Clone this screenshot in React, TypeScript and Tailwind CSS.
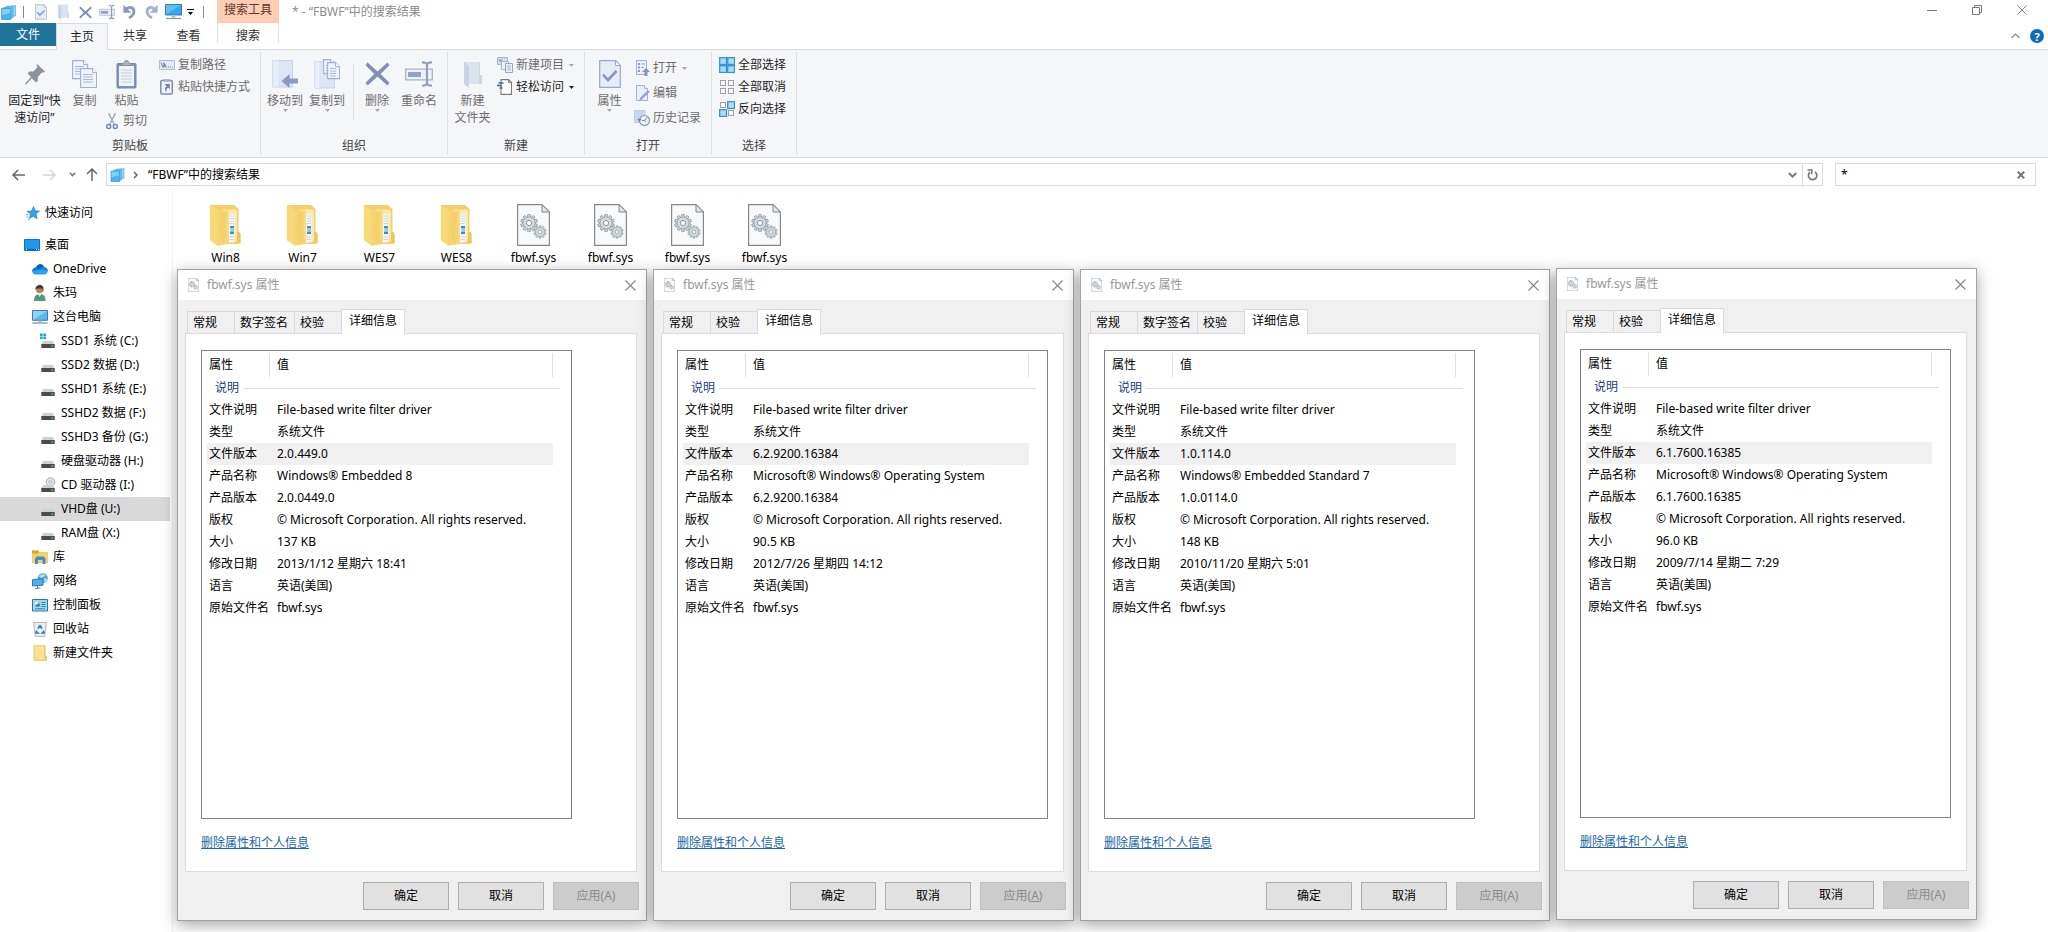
import React from "react";

type IconProps = { className?: string };

/* ---------- shared icons ---------- */

const LibraryIcon = ({ className = "w-4 h-4" }: IconProps) => (
  <svg viewBox="0 0 16 16" className={className} aria-hidden="true">
    <path d="M6 1.500 15.500.600v11L6 12.500z" fill="#9bd8f7" stroke="#4aa9dd" strokeWidth=".7" />
    <path d="M3.500 2.500 12.800 1.600v12l-9.300 1z" fill="#6cc6f2" stroke="#3d9fd6" strokeWidth=".7" />
    <path d="M.6 3.500h9.900v12H.6z" fill="#45b5f0" stroke="#2d93cf" strokeWidth=".7" />
    <path d="M1.300 4.200h8.500v4.500l-8.500 2z" fill="#7fd0f7" />
  </svg>
);

const CheckDoc = ({ className = "w-4 h-4" }: IconProps) => (
  <svg viewBox="0 0 22 28" className={className} aria-hidden="true">
    <path d="M.7.7h15.800l4.800 4.800v21.800H.7z" fill="#e6edf8" stroke="#98a9c8" strokeWidth="1.200" />
    <path d="M16.500.7v4.800h4.800z" fill="#fff" stroke="#98a9c8" strokeWidth="1" />
    <path d="m4 14.500 5 5.500 8.500-9" fill="none" stroke="#8497bd" strokeWidth="2.600" />
  </svg>
);

const PaleFolder = ({ className = "w-4 h-4" }: IconProps) => (
  <svg viewBox="0 0 18 27" className={className} aria-hidden="true">
    <path d="M0 1h16v22H5z" fill="#dbe3ef" />
    <path d="M16 1v13h2v9h-3V1z" fill="#ccd7e7" />
    <path d="M0 1 5 5v22L0 23z" fill="#c6d3e6" />
  </svg>
);

const Cross = ({ className = "w-4 h-4" }: IconProps) => (
  <svg viewBox="0 0 24 24" className={className} aria-hidden="true">
    <path d="M2.500 1 12 9.500 21.500 1 23.500 3.500 15 12l8.500 8.500-2 2.500L12 14.500 2.500 23 .5 20.500 9 12 .5 3.500z" fill="#7f90b4" />
  </svg>
);

const RenameIcon = ({ className = "w-4 h-4" }: IconProps) => (
  <svg viewBox="0 0 28 26" className={className} aria-hidden="true">
    <path d="M.7 8.200h26.600v10.600H.7z" fill="#eef2f9" stroke="#a3b2ce" strokeWidth="1.300" />
    <path d="M3 11h13v5H3z" fill="#93a5c6" />
    <path d="M17 1.300c3 0 4.500.4 5 2 .5-1.600 2-2 5-2M17 24.700c3 0 4.500-.4 5-2 .5 1.600 2 2 5 2M22 3v20" fill="none" stroke="#8f9fbd" strokeWidth="2.200" />
  </svg>
);

const UndoIcon = ({ className = "w-4 h-4", flip = false }: IconProps & { flip?: boolean }) => (
  <svg viewBox="0 0 16 16" className={className} aria-hidden="true">
    <g transform={flip ? "translate(16 0) scale(-1 1)" : undefined}>
      <path d="M4 5.800C8 1.500 13 4 12.700 8.500 12.500 11.500 10 13.500 7.500 14.800" fill="none" stroke={flip ? "#a3b1cb" : "#8798b9"} strokeWidth="3" />
      <path d="M1.500.8v8.600h8.500z" fill={flip ? "#a3b1cb" : "#8798b9"} />
    </g>
  </svg>
);

const MonitorIcon = ({ className = "w-4 h-4" }: IconProps) => (
  <svg viewBox="0 0 17 16" className={className} aria-hidden="true">
    <path d="M.5.500h16v10.500H.5z" fill="#2fa8ee" stroke="#3b6f96" strokeWidth=".9" />
    <path d="M1 1h15L1 10.500z" fill="#5cc0f5" />
    <path d="M6.500 11.500h4V14h-4z" fill="#b8c4cc" />
    <path d="M1 14.500h15" stroke="#8a9aa5" strokeWidth="1.200" />
  </svg>
);

const Caret = ({ className = "text-gray-400" }: IconProps) => (
  <svg viewBox="0 0 5 3" className={`h-[3px] w-[5px] shrink-0 ${className}`} aria-hidden="true">
    <path d="M0 0h5L2.500 3z" fill="currentColor" />
  </svg>
);

/* ---------- ribbon icons ---------- */

const PinIcon = () => (
  <svg viewBox="0 0 20 21" className="h-[21px] w-5" aria-hidden="true">
    <path d="m12 0 8 7.500-2 1.300-1.200-.3-4 4.500.2 3.500-2 2-4.200-4.200L1 20.500l-1-.3.5-1.200L6 13 2.500 9.200l2-1.800 4 .2 4-4.300L11.500 1.500z" fill="#8a939d" />
  </svg>
);

const SheetShape = ({ x, y, w = 15, h = 19 }: { x: number; y: number; w?: number; h?: number }) => (
  <g transform={`translate(${x} ${y})`}>
    <path d={`M.6.6h${w - 5}l4 4v${h - 5}H.6z`} fill="#eff4fb" stroke="#9fb0ce" strokeWidth="1.100" />
    <path d={`M${w - 4.4}.6v4h4`} fill="#fff" stroke="#9fb0ce" strokeWidth="1" />
    <path d={`M3 6.500h${w - 7}M3 9h${w - 7}M3 11.500h${w - 7}M3 14h${w - 7}`} stroke="#a9bad8" strokeWidth="1" />
  </g>
);

const CopyIcon = () => (
  <svg viewBox="0 0 25 28" className="h-7 w-[25px]" aria-hidden="true">
    <SheetShape x={0} y={0} w={16} h={19} />
    <SheetShape x={8} y={8} w={17} h={20} />
  </svg>
);

const ClipboardIcon = () => (
  <svg viewBox="0 0 21 29" className="h-[29px] w-[21px]" aria-hidden="true">
    <rect x="1" y="3.500" width="19" height="24.500" rx="1" fill="#8093b8" stroke="#7386ab" />
    <path d="M3 6h15v20H3z" fill="#f1f5fb" />
    <path d="M6 5.500V3.500L8.500 3 9 .8h3l.5 2.200 2.500.5v2z" fill="#a9b3c4" stroke="#7d8ba5" strokeWidth=".8" />
    <path d="M5 10h11M5 13h11M5 16h11M5 19h11M5 22h11" stroke="#c0cce2" strokeWidth="1" />
  </svg>
);

const ScissorsIcon = () => (
  <svg viewBox="0 0 12 17" className="h-[17px] w-3" aria-hidden="true">
    <path d="M2.500 0 8.500 12M9.500 0l-6 12" stroke="#a3aebf" strokeWidth="1.500" />
    <circle cx="2.700" cy="13.500" r="2" fill="none" stroke="#6f89b8" strokeWidth="1.500" />
    <circle cx="9.300" cy="13.500" r="2" fill="none" stroke="#6f89b8" strokeWidth="1.500" />
  </svg>
);

const PathIcon = () => (
  <svg viewBox="0 0 16 16" className="h-4 w-4" aria-hidden="true">
    <path d="M.5 3.500h15v9H.5z" fill="#e2eaf6" stroke="#aebcd6" />
    <path d="m2 5.500 2 5 1.500-4 1.700 4M4.500 5.500l1.700 5M9 10h1M11 10h1M13 10h1" fill="none" stroke="#6f82a8" />
  </svg>
);

const PasteShortcutIcon = () => (
  <svg viewBox="0 0 16 16" className="h-4 w-4" aria-hidden="true">
    <rect x="1.800" y="1.500" width="11.500" height="13.500" rx="1" fill="#eef3fb" stroke="#7b8db2" strokeWidth="1.500" />
    <path d="M4.500.3h6v2.400h-6z" fill="#a6b1c5" />
    <path d="M5.500 5h5.300v5.300L9.200 8.700c-2 1-2 2-1.200 4-2.800-1.500-2.500-4.200-.3-5.500z" fill="#6e82aa" />
  </svg>
);

const MoveToIcon = () => (
  <svg viewBox="0 0 26 28" className="h-7 w-[26px]" aria-hidden="true">
    <path d="M.5.500h20v26.500H.5z" fill="#dbe5f3" stroke="#c5d2e6" />
    <path d="M.5.500h6v26.500h-6z" fill="#e5edf8" />
    <path d="m9.500 21 8-7v4.500H26v5h-8.500V28z" fill="#8a9bbd" />
  </svg>
);

const CopyToIcon = () => (
  <svg viewBox="0 0 26 30" className="h-[30px] w-[26px]" aria-hidden="true">
    <path d="M.5 2.500h20v26.500H.5z" fill="#dbe5f3" stroke="#c5d2e6" />
    <path d="M.5 2.500h5v26.500h-5z" fill="#e7eef9" />
    <SheetShape x={9} y={0} w={12} h={15} />
    <SheetShape x={13} y={3} w={13} h={17} />
  </svg>
);

const NewItemIcon = () => (
  <svg viewBox="0 0 16 16" className="h-4 w-4" aria-hidden="true">
    <path d="M.5.500h10v7h-10z" fill="#cfdcef" stroke="#a3b4d1" />
    <path d="M2 2.500h3v2H2z" fill="#8ea2c6" />
    <path d="M4.500 4.500h7v8h-7z" fill="#edf2fa" stroke="#a3b4d1" />
    <path d="M8.500 6.500h7v9h-7z" fill="#edf2fa" stroke="#94a6c8" />
    <path d="M10 9h4M10 11h4M10 13h4" stroke="#a9bad8" />
  </svg>
);

const EasyAccessIcon = () => (
  <svg viewBox="0 0 16 16" className="h-4 w-4" aria-hidden="true">
    <path d="M4 .6h7.500l3 3v11.800H4z" fill="#fff" stroke="#7c7c7c" strokeWidth="1.100" />
    <path d="M11.500.6v3h3" fill="none" stroke="#7c7c7c" />
    <path d="M1.500 4h5M0 6.500h5M2.500 9h3" stroke="#2f6ea8" strokeWidth="1.300" />
  </svg>
);

const OpenIcon = () => (
  <svg viewBox="0 0 16 16" className="h-4 w-4" aria-hidden="true">
    <path d="M2.500.500h10v14h-10z" fill="#eaf0f9" stroke="#a3b3cf" />
    <path d="M4 3h2v2H4zM4 6.500h2v2H4zM4 10h2v2H4z" fill="#8799bd" />
    <path d="M7.500 4H11M7.500 7.500H10" stroke="#8fa1c2" />
    <path d="m12 8 4 4h-2.500v4h-3v-4H8z" fill="#8395b8" />
  </svg>
);

const EditIcon = () => (
  <svg viewBox="0 0 16 16" className="h-4 w-4" aria-hidden="true">
    <path d="M2.500.500h8l3 3v12h-11z" fill="#eaf0f9" stroke="#a3b3cf" />
    <path d="M10.500.500v3h3" fill="#fff" stroke="#a3b3cf" />
    <path d="m14 5 1.800 1.800-7.800 7.700-2.500.8.700-2.500z" fill="#93a4c6" />
  </svg>
);

const HistoryIcon = () => (
  <svg viewBox="0 0 16 16" className="h-4 w-4" aria-hidden="true">
    <path d="M.5.500h10.500v12H.5z" fill="#c9d7eb" stroke="#bccbe2" />
    <circle cx="10.500" cy="10.500" r="5" fill="#eef3fa" stroke="#8799bb" strokeWidth="1.200" />
    <path d="M8 10.500h2.500L13 7.500M10.500 10.500l1.500 1.500" fill="none" stroke="#7487ae" />
    <path d="m3 9 2.500 3L7.500 9z" fill="#7487ae" />
  </svg>
);

const SelectIcon = ({ on }: { on: boolean[] }) => (
  <svg viewBox="0 0 16 16" className="h-4 w-4" aria-hidden="true">
    {on.map((filled, i) => {
      const x = (i % 2) * 8;
      const y = Math.floor(i / 2) * 8;
      return filled ? (
        <rect key={i} x={x + 0.7} y={y + 0.7} width="6.800" height="6.800" fill="#a8dcf7" stroke="#3793cf" strokeWidth="1.300" />
      ) : (
        <rect key={i} x={x + 1.5} y={y + 1.5} width="5" height="5" fill="#fff" stroke="#a0a0a0" />
      );
    })}
  </svg>
);

/* ---------- tree icons ---------- */

const StarIcon = () => (
  <svg viewBox="0 0 16 16" className="h-4 w-4" aria-hidden="true">
    <path d="m9.500 1.500 1.600 4.200 4.400.3-3.400 3 1 4.700-3.900-2.400-3.700 2.300.8-4.300L3 6.300l4.500-.4z" fill="#3aa0e6" stroke="#2b8bd2" strokeWidth=".7" />
    <path d="M2 9.500h2.500M2.500 12h2M4 14.500h1.500" stroke="#5fb3ea" />
  </svg>
);

const DesktopIcon = () => (
  <svg viewBox="0 0 16 16" className="h-4 w-4" aria-hidden="true">
    <path d="M.5 2.500h15v11H.5z" fill="#1e96ef" stroke="#1573bd" />
    <path d="M1 12.500h14" stroke="#0f5d9e" strokeWidth="1.200" />
    <path d="M2 12.500h1M12 12.500h1M14 12.500h.8" stroke="#e8f5ff" />
  </svg>
);

const OneDriveIcon = () => (
  <svg viewBox="0 0 16 16" className="h-4 w-4" aria-hidden="true">
    <path d="M4 6.500C5.500 2 10.500 1.800 12.200 6L7 10 1.500 8.500C2 7 3 6.500 4 6.500z" fill="#0a5fb5" />
    <path d="M3.800 6.400C1 6.500-.5 9 .3 11L7.500 8.500z" fill="#1279d0" />
    <path d="M12 6c3 0 4.500 3 3.500 5L7 8.500C8.500 7 10 6 12 6z" fill="#1a86dd" />
    <path d="M.3 11C1 13 2.500 13.500 4 13.500h8.500c1.500 0 2.500-1 3-2.500L7.500 8.300z" fill="#2b9ff0" />
  </svg>
);

const UserIcon = () => (
  <svg viewBox="0 0 16 16" className="h-4 w-4" aria-hidden="true">
    <path d="M2 16c0-5 2-7 6-7s5.500 2 5.500 7z" fill="#4f9a80" />
    <path d="m6 9 1.500 3L9.500 9z" fill="#dfe8e4" />
    <circle cx="7.500" cy="5" r="3.300" fill="#b9845c" />
    <path d="M3.500 5C3 1.500 5.500 0 7.700 0c2.500 0 4.200 1.500 3.800 5.500L10.500 7V3.500H5z" fill="#4b3527" />
  </svg>
);

const PcIcon = () => (
  <svg viewBox="0 0 16 16" className="h-4 w-4" aria-hidden="true">
    <path d="M.5 1.500h15v9.800H.5z" fill="#58b8f0" stroke="#3f7ea8" />
    <path d="M1 2h14L1 11z" fill="#8ed3f8" />
    <path d="M6.500 11.500h3V13h-3z" fill="#aab8c1" />
    <path d="M.5 14h15" stroke="#8fa2b0" strokeWidth="1.500" />
  </svg>
);

const DriveIcon = ({ kind = "disk" }: { kind?: "disk" | "system" | "cd" }) => (
  <svg viewBox="0 0 16 16" className="h-4 w-4" aria-hidden="true">
    {kind === "cd" && (
      <g>
        <circle cx="10.500" cy="5" r="4.300" fill="#dfe3e6" stroke="#9a9fa3" strokeWidth=".8" />
        <circle cx="10.500" cy="5" r="1.300" fill="#fff" stroke="#9a9fa3" strokeWidth=".7" />
      </g>
    )}
    {kind === "system" && <path d="M0 .5h2.700v2.500H0zM3.300.5H6v2.500H3.300zM0 3.600h2.700v2.500H0zM3.300 3.600H6v2.500H3.300z" fill="#22a7dc" />}
    <path d="M3.500 8h9l2 3H1.500z" fill="#cdd0d2" />
    <path d="M1.300 11h13.400v4H1.300z" fill="#484c4f" />
    <path d="M11.200 12.500h2v1.200h-2z" fill="#5fe04a" />
  </svg>
);

const LibraryFolderIcon = () => (
  <svg viewBox="0 0 16 16" className="h-4 w-4" aria-hidden="true">
    <path d="M0 1.500h6l1 1.500h9v11H0z" fill="#f6cf66" />
    <path d="M0 1.500h6l1 1.500-1 1.500H0z" fill="#d9a32e" />
    <path d="M3 15V9.500L5 7.500h6.500L13.500 9.500V15h-3v-4H6v4z" fill="#3f8fc9" />
  </svg>
);

const NetworkIcon = () => (
  <svg viewBox="0 0 16 16" className="h-4 w-4" aria-hidden="true">
    <circle cx="10.800" cy="5.200" r="5" fill="#5aa2cf" />
    <path d="M7 3c2-2 5-2.500 7-1-2 1-3 3-5 3zM12 5c1 0 3 1 3.500 1-.5 2-1.500 3-3 4z" fill="#b5dcec" />
    <path d="M.5 6.500 11 5.800v6.400L.5 13z" fill="#49b2f2" stroke="#2c7db5" />
    <path d="M3 15.500 8.500 15M5.500 13v2" stroke="#6d8697" />
  </svg>
);

const ControlPanelIcon = () => (
  <svg viewBox="0 0 16 16" className="h-4 w-4" aria-hidden="true">
    <path d="M.5 2.500h15v11.500H.5z" fill="#9bd9f5" stroke="#2678a8" />
    <circle cx="5.500" cy="7" r="2.600" fill="#fff" />
    <path d="M5.500 7V4.400A2.600 2.600 0 0 1 8.100 7z" fill="#e8a33c" />
    <path d="M5.500 7h2.600A2.600 2.600 0 0 1 3 8z" fill="#2f86bf" />
    <path d="M9.500 5.500h4M9.500 7.500h4M9.500 9.500h4M3 11.800h10" stroke="#2678a8" strokeWidth=".9" />
  </svg>
);

const RecycleIcon = () => (
  <svg viewBox="0 0 16 16" className="h-4 w-4" aria-hidden="true">
    <path d="M1.500 1.500h13l-1.800 14H3.300z" fill="#eaedf0" stroke="#a4abb1" strokeWidth=".8" />
    <path d="m8 4.500 2 3M6 7.500l2-3M4.800 9.500 4 12h3.200M11.200 9.500 12 12H9" fill="none" stroke="#2f7fc4" strokeWidth="1.700" />
  </svg>
);

const PlainFolderIcon = () => (
  <svg viewBox="0 0 16 16" className="h-4 w-4" aria-hidden="true">
    <path d="M2 .8h11v9.500l1.500 1v4H2z" fill="#f0cf6a" stroke="#dcb44c" strokeWidth=".7" />
    <path d="M2.500 1.200h9.500v13.500H2.500z" fill="#fbe296" />
  </svg>
);

/* ---------- file icons ---------- */

const BigFolder = () => (
  <svg viewBox="0 0 34 42" className="h-[42px] w-[34px]" aria-hidden="true">
    <path d="M1 1h24l4.500 4v23.500l2 1.500v9l-6 1H12z" fill="#f3d06c" />
    <path d="M13 5.500h13.500l1.500 2V38l-14 2z" fill="#fbe9ab" />
    <path d="M20 10h5.500v27.500L20 38.500z" fill="#f4f8fb" />
    <path d="M20.500 12h4.500M20.500 14.500h4.500M20.500 17h4.500M20.500 19.500h4.500M20.500 33h4.500M20.500 35.500h4.500" stroke="#c3ccd6" strokeWidth=".8" />
    <path d="M21 22h4v2.500h-4zM21 27.500h4V30h-4z" fill="#3a8fc4" />
    <path d="M21.500 24.500h3.500v2.500h-3.500z" fill="#8fc9e8" />
    <path d="M28 28h2.500l1 1.500v10H26V38l2-.5z" fill="#eec65c" />
    <path d="M.8 1.200 8 6v35.500L.8 36z" fill="#f8dc84" />
    <path d="M8 6h5l2.500 2v9l-3 9v11.500l7-1v3L8 41.500z" fill="#efc95f" />
    <path d="M1 1.200 8.500 6H20V40l-11 1.700L1 36.300z" fill="#f7d877" opacity=".8" />
    <path d="M12.500 8h5v30.500l-3.500.7-4-13 2.500-9z" fill="#f2cd65" opacity=".7" />
  </svg>
);

const gearTeeth = [0, 36, 72, 108, 144, 180, 216, 252, 288, 324];

const Gear = ({ cx, cy, r }: { cx: number; cy: number; r: number }) => (
  <g transform={`translate(${cx} ${cy}) scale(${r / 8})`}>
    {gearTeeth.map((a) => (
      <rect key={a} x="-1.500" y="-9.500" width="3" height="4" transform={`rotate(${a})`} fill="#d3dbe1" stroke="#8b959d" strokeWidth=".9" />
    ))}
    <circle r="6.800" fill="#d3dbe1" stroke="#8b959d" strokeWidth=".9" />
    <circle r="6.200" fill="#d3dbe1" />
    <circle r="3" fill="#f8f9fa" stroke="#8b959d" strokeWidth="1.100" />
  </g>
);

const SysFile = ({ className = "h-[42px] w-[33px]" }: IconProps) => (
  <svg viewBox="0 0 33 42" className={className} aria-hidden="true">
    <path d="M.6.600h24.400l7.400 7.400v33.400H.6z" fill="#f8f9fa" stroke="#85898c" strokeWidth="1.200" />
    <path d="M25 .600V8h7.400z" fill="#e3e6e8" stroke="#85898c" strokeWidth="1" />
    <Gear cx={12} cy={19} r={7} />
    <Gear cx={23} cy={28} r={5.2} />
  </svg>
);

const CloseX = ({ className = "h-[11px] w-[11px]" }: IconProps) => (
  <svg viewBox="0 0 11 11" className={className} aria-hidden="true">
    <path d="m.5.500 10 10M10.500.500l-10 10" stroke="#858585" strokeWidth="1.100" />
  </svg>
);

/* ---------- ribbon ---------- */

function Group({ label, className, children }: { label: string; className: string; children: React.ReactNode }) {
  return (
    <section className={`flex shrink-0 flex-col border-r border-[#dddfe2] ${className}`}>
      <div className="flex flex-1">{children}</div>
      <h2 className="pb-px text-center leading-4 text-[#444]">{label}</h2>
    </section>
  );
}

function BigButton({
  icon,
  lines,
  width,
  enabled = false,
  caret = false,
}: {
  icon: React.ReactNode;
  lines: string[];
  width: string;
  enabled?: boolean;
  caret?: boolean;
}) {
  return (
    <button type="button" className={`flex shrink-0 flex-col items-center pt-1 ${width} ${enabled ? "text-[#1e1e1e]" : "text-[#6d6d6d]"}`}>
      <span className="flex h-9 items-center justify-center">{icon}</span>
      {lines.map((line) => (
        <span key={line} className="whitespace-nowrap leading-[17px]">
          {line}
        </span>
      ))}
      {caret && <Caret className="text-[#a8a8a8]" />}
    </button>
  );
}

function SmallButton({ icon, label, enabled = false, caret = false }: { icon: React.ReactNode; label: string; enabled?: boolean; caret?: boolean }) {
  return (
    <button type="button" className={`flex h-[22px] items-center whitespace-nowrap ${enabled ? "text-[#1e1e1e]" : "text-[#6d6d6d]"}`}>
      {icon}
      <span className="ml-[3px] leading-4">{label}</span>
      {caret && <Caret className={enabled ? "ml-[5px] text-[#1e1e1e]" : "ml-[5px] text-[#a8a8a8]"} />}
    </button>
  );
}

function Ribbon() {
  return (
    <div className="flex h-[109px] border-y border-[#d8dade] bg-[#f5f6f8] py-[2px]">
      <Group label="剪贴板" className="w-[261px]">
        <BigButton width="w-[69px]" enabled icon={<PinIcon />} lines={["固定到“快", "速访问”"]} />
        <BigButton width="w-[31px]" icon={<CopyIcon />} lines={["复制"]} />
        <div className="flex w-[53px] shrink-0 flex-col items-center">
          <BigButton width="w-[53px]" icon={<ClipboardIcon />} lines={["粘贴"]} />
          <button type="button" className="mt-px flex h-[22px] items-center gap-[5px] whitespace-nowrap text-[#6d6d6d]">
            <ScissorsIcon />
            剪切
          </button>
        </div>
        <div className="flex flex-col pt-[2px] pl-[6px]">
          <SmallButton icon={<PathIcon />} label="复制路径" />
          <SmallButton icon={<PasteShortcutIcon />} label="粘贴快捷方式" />
        </div>
      </Group>

      <Group label="组织" className="w-[187px]">
        <BigButton width="w-[48px]" icon={<MoveToIcon />} lines={["移动到"]} caret />
        <BigButton width="w-[36px]" icon={<CopyToIcon />} lines={["复制到"]} caret />
        <div className="mt-3 mr-[5px] ml-2 h-14 w-px shrink-0 bg-[#dddfe2]" />
        <BigButton width="w-[36px]" icon={<Cross className="h-[26px] w-[25px]" />} lines={["删除"]} caret />
        <BigButton width="w-[48px]" icon={<RenameIcon className="h-[26px] w-7" />} lines={["重命名"]} />
      </Group>

      <Group label="新建" className="w-[137px]">
        <BigButton width="w-[49px]" icon={<PaleFolder className="h-[27px] w-[18px]" />} lines={["新建", "文件夹"]} />
        <div className="flex flex-col pt-[2px]">
          <SmallButton icon={<NewItemIcon />} label="新建项目" caret />
          <SmallButton icon={<EasyAccessIcon />} label="轻松访问" enabled caret />
        </div>
      </Group>

      <Group label="打开" className="w-[127px]">
        <BigButton width="w-[49px]" icon={<CheckDoc className="h-7 w-[22px]" />} lines={["属性"]} caret />
        <div className="flex flex-col gap-[3px] pt-[5px]">
          <SmallButton icon={<OpenIcon />} label="打开" caret />
          <SmallButton icon={<EditIcon />} label="编辑" />
          <SmallButton icon={<HistoryIcon />} label="历史记录" />
        </div>
      </Group>

      <Group label="选择" className="w-[85px]">
        <div className="flex flex-col pt-[2px] pl-[7px]">
          <SmallButton enabled icon={<SelectIcon on={[true, true, true, true]} />} label="全部选择" />
          <SmallButton enabled icon={<SelectIcon on={[false, false, false, false]} />} label="全部取消" />
          <SmallButton enabled icon={<SelectIcon on={[false, true, true, false]} />} label="反向选择" />
        </div>
      </Group>
    </div>
  );
}

/* ---------- window header ---------- */

function Header() {
  return (
    <header>
      <div className="flex h-[23px] items-stretch">
        <div className="flex w-[217px] items-center pt-[1px]">
          <LibraryIcon className="ml-px h-[15px] w-[15px]" />
          <span className="ml-[7px] h-3 w-px bg-[#8a8a8a]" />
          <div className="ml-[6px] flex">
            <button type="button" aria-label="属性" className="flex w-[22px] justify-center"><CheckDoc className="h-4 w-3" /></button>
            <button type="button" aria-label="新建文件夹" className="flex w-[22px] justify-center"><PaleFolder className="h-4 w-[13px]" /></button>
            <button type="button" aria-label="删除" className="flex w-[22px] items-center justify-center"><Cross className="h-[13px] w-[13px]" /></button>
            <button type="button" aria-label="重命名" className="flex w-[22px] justify-center"><RenameIcon className="h-4 w-4" /></button>
            <button type="button" aria-label="撤消" className="flex w-[22px] justify-center"><UndoIcon className="h-[15px] w-[15px]" /></button>
            <button type="button" aria-label="恢复" className="flex w-[22px] justify-center"><UndoIcon flip className="h-[15px] w-[15px]" /></button>
            <button type="button" aria-label="桌面" className="flex w-[22px] justify-center"><MonitorIcon className="h-4 w-[17px]" /></button>
          </div>
          <button type="button" aria-label="自定义快速访问工具栏" className="ml-[3px] flex flex-col items-center gap-[2px]">
            <span className="h-px w-[7px] bg-black" />
            <Caret className="text-black" />
          </button>
          <span className="ml-[9px] h-3 w-px bg-[#8a8a8a]" />
        </div>
        <div className="flex w-[62px] justify-center bg-[#fccdb3] pt-[2px] leading-4 text-[#5b3a2a]">搜索工具</div>
        <h1 className="flex-1 pt-[4px] pl-[13px] leading-4 text-[#8c8c8c]">* - “FBWF”中的搜索结果</h1>
        <div className="flex items-start pr-1">
          <button type="button" aria-label="最小化" className="flex h-5 w-[45px] items-center justify-center">
            <span className="h-px w-[10px] bg-[#777]" />
          </button>
          <button type="button" aria-label="还原" className="flex h-5 w-[45px] items-center justify-center">
            <svg viewBox="0 0 10 10" className="h-[10px] w-[10px]" aria-hidden="true">
              <path d="M.5 2.500h7v7h-7zM2.500 2.500v-2h7v7h-2" fill="none" stroke="#777" />
            </svg>
          </button>
          <button type="button" aria-label="关闭" className="flex h-5 w-[45px] items-center justify-center">
            <CloseX className="h-[10px] w-[10px]" />
          </button>
        </div>
      </div>

      <nav className="flex h-[26px] items-stretch">
        <button type="button" className="mb-[3px] w-14 bg-[#1f7299] text-white">文件</button>
        <button type="button" className="relative -mb-px w-[52px] border-x border-t border-[#d8dade] bg-[#f5f6f8] text-[#1e1e1e]">主页</button>
        <button type="button" className="w-[54px] text-[#333]">共享</button>
        <button type="button" className="w-[53px] text-[#333]">查看</button>
        <span className="w-[2px]" />
        <button type="button" className="mb-[6px] w-[62px] border-x border-[#e2e2e2] pt-[5px] text-[#333]">搜索</button>
        <div className="ml-auto flex items-center pr-1">
          <button type="button" aria-label="最小化功能区" className="mr-[10px]">
            <svg viewBox="0 0 9 6" className="h-[6px] w-[9px]" aria-hidden="true">
              <path d="m.5 5 4-4 4 4" fill="none" stroke="#8b8b8b" strokeWidth="1.200" />
            </svg>
          </button>
          <button type="button" aria-label="帮助" className="flex h-[14px] w-[14px] items-center justify-center rounded-full bg-[#0f6cbd] text-[11px] leading-none font-bold text-white">
            ?
          </button>
        </div>
      </nav>
      <Ribbon />

      <div className="flex h-[33px] items-center">
        <div className="flex w-[106px] items-center">
          <button type="button" aria-label="后退" className="ml-3">
            <svg viewBox="0 0 14 12" className="h-3 w-[14px]" aria-hidden="true">
              <path d="M6 1 1 6l5 5M1 6h12" fill="none" stroke="#666" strokeWidth="1.500" />
            </svg>
          </button>
          <button type="button" aria-label="前进" className="ml-4">
            <svg viewBox="0 0 14 12" className="h-3 w-[14px]" aria-hidden="true">
              <path d="m8 1 5 5-5 5M13 6H1" fill="none" stroke="#d6d6d6" strokeWidth="1.500" />
            </svg>
          </button>
          <button type="button" aria-label="最近浏览的位置" className="ml-[13px]">
            <svg viewBox="0 0 7 5" className="h-[5px] w-[7px]" aria-hidden="true">
              <path d="m.8.800 2.700 2.700L6.200.800" fill="none" stroke="#777" strokeWidth="1.600" />
            </svg>
          </button>
          <button type="button" aria-label="上移" className="ml-[10px]">
            <svg viewBox="0 0 12 13" className="h-[13px] w-3" aria-hidden="true">
              <path d="m1 6 5-5 5 5M6 1v12" fill="none" stroke="#666" strokeWidth="1.500" />
            </svg>
          </button>
        </div>
        <div className="flex h-[23px] flex-1 items-center border border-[#d9d9d9]">
          <LibraryIcon className="ml-[3px] h-[14px] w-[15px]" />
          <svg viewBox="0 0 5 8" className="ml-[8px] h-2 w-[5px]" aria-hidden="true">
            <path d="m1 1 3 3-3 3" fill="none" stroke="#666" strokeWidth="1.500" />
          </svg>
          <span className="ml-[10px] flex-1 leading-4 text-black">“FBWF”中的搜索结果</span>
          <button type="button" aria-label="展开地址栏" className="mr-[5px]">
            <svg viewBox="0 0 9 6" className="h-[6px] w-[9px]" aria-hidden="true">
              <path d="m.8 1 3.700 3.700L8.200 1" fill="none" stroke="#777" strokeWidth="1.900" />
            </svg>
          </button>
          <button type="button" aria-label="刷新" className="flex h-full w-5 items-center justify-center border-l border-[#d9d9d9]">
            <svg viewBox="0 0 11 12" className="h-3 w-[11px]" aria-hidden="true">
              <path d="M8 3A4.200 4.200 0 1 1 3 3.200" fill="none" stroke="#777" strokeWidth="1.700" />
              <path d="M.5.900h4.300v4.300" fill="none" stroke="#777" strokeWidth="1.500" />
            </svg>
          </button>
        </div>
        <div className="mr-3 ml-3 flex h-[23px] w-[201px] items-center border border-[#d9d9d9]">
          <input type="text" aria-label="搜索" defaultValue="*" className="min-w-0 flex-1 bg-transparent pl-[5px] text-black outline-none" />
          <button type="button" aria-label="清除搜索" className="mr-[10px]">
            <svg viewBox="0 0 8 8" className="h-2 w-2" aria-hidden="true">
              <path d="m.8.800 6.400 6.400M7.200.800.8 7.200" stroke="#777" strokeWidth="2" />
            </svg>
          </button>
        </div>
      </div>
    </header>
  );
}

/* ---------- navigation tree ---------- */

const tree: { label: string; icon: React.ReactNode; level: number; selected?: boolean }[] = [
  { label: "桌面", icon: <DesktopIcon />, level: 0 },
  { label: "OneDrive", icon: <OneDriveIcon />, level: 1 },
  { label: "朱玛", icon: <UserIcon />, level: 1 },
  { label: "这台电脑", icon: <PcIcon />, level: 1 },
  { label: "SSD1 系统 (C:)", icon: <DriveIcon kind="system" />, level: 2 },
  { label: "SSD2 数据 (D:)", icon: <DriveIcon />, level: 2 },
  { label: "SSHD1 系统 (E:)", icon: <DriveIcon />, level: 2 },
  { label: "SSHD2 数据 (F:)", icon: <DriveIcon />, level: 2 },
  { label: "SSHD3 备份 (G:)", icon: <DriveIcon />, level: 2 },
  { label: "硬盘驱动器 (H:)", icon: <DriveIcon />, level: 2 },
  { label: "CD 驱动器 (I:)", icon: <DriveIcon kind="cd" />, level: 2 },
  { label: "VHD盘 (U:)", icon: <DriveIcon />, level: 2, selected: true },
  { label: "RAM盘 (X:)", icon: <DriveIcon />, level: 2 },
  { label: "库", icon: <LibraryFolderIcon />, level: 1 },
  { label: "网络", icon: <NetworkIcon />, level: 1 },
  { label: "控制面板", icon: <ControlPanelIcon />, level: 1 },
  { label: "回收站", icon: <RecycleIcon />, level: 1 },
  { label: "新建文件夹", icon: <PlainFolderIcon />, level: 1 },
];

const indents = ["pl-6", "pl-8", "pl-10"];

function TreeItem({ label, icon, level, selected = false }: { label: string; icon: React.ReactNode; level: number; selected?: boolean }) {
  return (
    <li>
      <a href="#" className={`flex h-6 items-center gap-[5px] whitespace-nowrap text-black ${indents[level]} ${selected ? "bg-[#d9d9d9]" : ""}`}>
        {icon}
        <span>{label}</span>
      </a>
    </li>
  );
}

function Sidebar() {
  return (
    <nav className="w-[173px] shrink-0 border-r border-[#f3f3f3] pt-[10px] pr-[2px]">
      <ul className="mb-2">
        <TreeItem label="快速访问" icon={<StarIcon />} level={0} />
      </ul>
      <ul>
        {tree.map((item) => (
          <TreeItem key={item.label} {...item} />
        ))}
      </ul>
    </nav>
  );
}

/* ---------- files ---------- */

const files = [
  { name: "Win8", folder: true },
  { name: "Win7", folder: true },
  { name: "WES7", folder: true },
  { name: "WES8", folder: true },
  { name: "fbwf.sys", folder: false },
  { name: "fbwf.sys", folder: false },
  { name: "fbwf.sys", folder: false },
  { name: "fbwf.sys", folder: false },
];

function FileList() {
  return (
    <main className="flex-1">
      <ul className="flex pt-[13px] pl-[14px]">
        {files.map((file, i) => (
          <li key={i} className="flex w-[77px] flex-col items-center">
            {file.folder ? <BigFolder /> : <SysFile />}
            <span className="mt-1 leading-4 text-black">{file.name}</span>
          </li>
        ))}
      </ul>
    </main>
  );
}

/* ---------- property dialogs ---------- */

type DialogData = {
  place: string;
  signed: boolean;
  accessKey?: boolean;
  version: string;
  product: string;
  productVersion: string;
  size: string;
  modified: string;
};

const dialogs: DialogData[] = [
  {
    place: "left-[177px] top-[269px] w-[470px]",
    signed: true,
    version: "2.0.449.0",
    product: "Windows® Embedded 8",
    productVersion: "2.0.0449.0",
    size: "137 KB",
    modified: "2013/1/12 星期六 18:41",
  },
  {
    place: "left-[653px] top-[269px] w-[421px]",
    signed: false,
    accessKey: true,
    version: "6.2.9200.16384",
    product: "Microsoft® Windows® Operating System",
    productVersion: "6.2.9200.16384",
    size: "90.5 KB",
    modified: "2012/7/26 星期四 14:12",
  },
  {
    place: "left-[1080px] top-[269px] w-[470px]",
    signed: true,
    version: "1.0.114.0",
    product: "Windows® Embedded Standard 7",
    productVersion: "1.0.0114.0",
    size: "148 KB",
    modified: "2010/11/20 星期六 5:01",
  },
  {
    place: "left-[1556px] top-[268px] w-[421px]",
    signed: false,
    version: "6.1.7600.16385",
    product: "Microsoft® Windows® Operating System",
    productVersion: "6.1.7600.16385",
    size: "96.0 KB",
    modified: "2009/7/14 星期二 7:29",
  },
];

function Tab({ label, width }: { label: string; width: string }) {
  return (
    <button type="button" role="tab" className={`h-[22px] border-t border-l border-[#d9d9d9] pl-[5px] text-left text-black ${width}`}>
      {label}
    </button>
  );
}

function PropertiesDialog({ data }: { data: DialogData }) {
  const rows: [string, string][] = [
    ["文件说明", "File-based write filter driver"],
    ["类型", "系统文件"],
    ["文件版本", data.version],
    ["产品名称", data.product],
    ["产品版本", data.productVersion],
    ["版权", "© Microsoft Corporation. All rights reserved."],
    ["大小", data.size],
    ["修改日期", data.modified],
    ["语言", "英语(美国)"],
    ["原始文件名", "fbwf.sys"],
  ];
  return (
    <section role="dialog" aria-label="fbwf.sys 属性" className={`absolute border border-[#a3a3a3] bg-[#f0f0f0] shadow-[0_4px_14px_rgba(0,0,0,0.36)] ${data.place}`}>
      <div className="flex h-[30px] items-center bg-white pr-[10px] pl-[10px]">
        <SysFile className="h-[14px] w-[11px]" />
        <h2 className="ml-2 flex-1 text-[#999]">fbwf.sys 属性</h2>
        <button type="button" aria-label="关闭">
          <CloseX />
        </button>
      </div>

      <div className="pt-[9px] pr-[9px] pl-[7px]">
        <div role="tablist" className="flex items-end pl-[2px]">
          <Tab label="常规" width="w-[47px]" />
          {data.signed && <Tab label="数字签名" width="w-[60px]" />}
          <Tab label="校验" width="w-[47px]" />
          <button type="button" role="tab" aria-selected="true" className="relative -mb-px h-[25px] w-[64px] border border-b-0 border-[#d9d9d9] bg-white pb-[2px] text-black">
            详细信息
          </button>
        </div>
        <div className="border border-[#dcdcdc] bg-white px-[15px] pt-4 pb-5">
          <div className="h-[469px] w-[371px] border border-[#7f8387] px-[5px]">
            <table className="w-[353px] table-fixed border-collapse text-left text-black">
              <colgroup>
                <col className="w-[63px]" />
                <col className="w-[283px]" />
                <col />
              </colgroup>
              <thead>
                <tr className="h-[26px]">
                  <th className="p-0 align-bottom font-normal">
                    <div className="flex h-6 items-center border-r border-[#e0e0e0] pl-[2px]">属性</div>
                  </th>
                  <th className="p-0 align-bottom font-normal">
                    <div className="flex h-6 items-center border-r border-[#e0e0e0] pl-[7px]">值</div>
                  </th>
                  <td className="p-0" />
                </tr>
              </thead>
              <tbody>
                <tr className="h-[22px]">
                  <th colSpan={3} className="p-0 font-normal text-[#1e3c7d]">
                    <div className="flex items-center gap-1 pl-2 leading-4">
                      说明
                      <span className="h-px flex-1 bg-[#dadfe3]" />
                    </div>
                  </th>
                </tr>
                {rows.map(([name, value], i) => (
                  <tr key={name} className="h-[22px] leading-4 whitespace-nowrap">
                    <th className={`p-0 pl-[2px] font-normal ${i === 2 ? "bg-[#f0f0f0]" : ""}`}>{name}</th>
                    <td className={`p-0 pl-[7px] ${i === 2 ? "bg-[#f0f0f0]" : ""}`}>{value}</td>
                    <td className="p-0" />
                  </tr>
                ))}
              </tbody>
            </table>
          </div>
          <a href="#" className="mt-4 block w-max leading-4 text-[#1a66a8] underline">
            删除属性和个人信息
          </a>
        </div>
      </div>

      <div className="flex justify-end gap-[9px] pt-[10px] pr-[7px] pb-[10px]">
        <button type="button" className="h-7 w-[86px] border border-[#adadad] bg-[#e1e1e1] text-black">确定</button>
        <button type="button" className="h-7 w-[86px] border border-[#adadad] bg-[#e1e1e1] text-black">取消</button>
        <button type="button" disabled className="h-7 w-[86px] border border-[#bfbfbf] bg-[#cccccc] text-[#8a8a8a]">
          应用({data.accessKey ? <span className="underline">A</span> : "A"})
        </button>
      </div>
    </section>
  );
}

export default function App() {
  return (
    <div className="relative flex min-h-screen flex-col overflow-hidden bg-white font-['Noto_Sans','Noto_Sans_CJK_SC',sans-serif] text-[12px] leading-4">
      <Header />
      <div className="flex flex-1">
        <Sidebar />
        <FileList />
      </div>
      {dialogs.map((data) => (
        <PropertiesDialog key={data.place} data={data} />
      ))}
    </div>
  );
}
